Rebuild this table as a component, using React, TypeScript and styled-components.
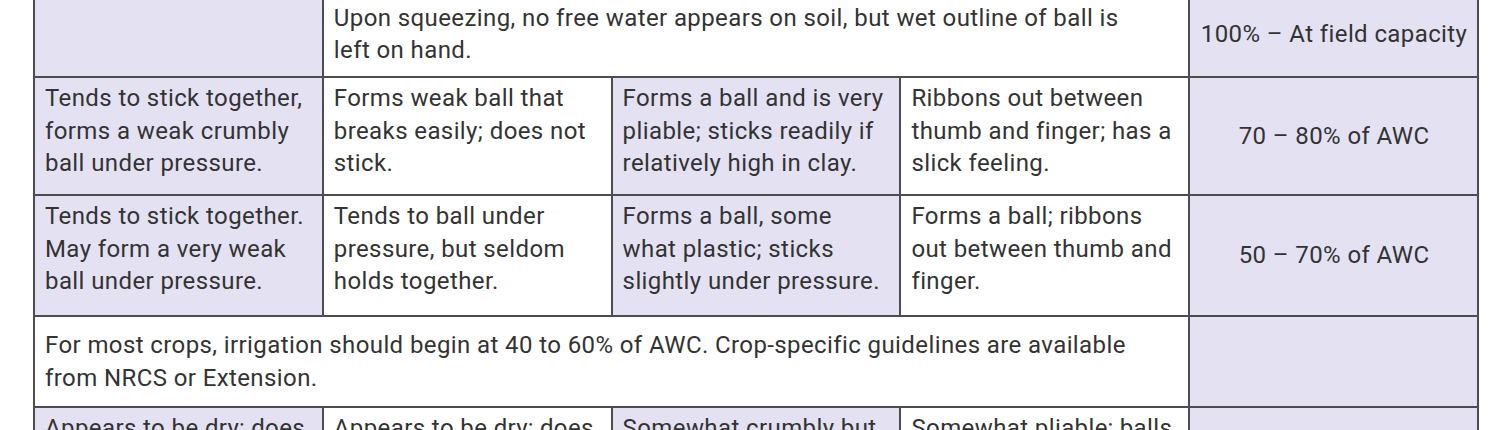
import React from "react";
import styled, { createGlobalStyle } from "styled-components";

const GlobalStyle = createGlobalStyle`
  html, body {
    margin: 0;
    padding: 0;
    background: #ffffff;
  }
  body {
    font-family: Roboto, "Liberation Sans", Arial, sans-serif;
    color: #333333;
    overflow: hidden;
  }
`;

const Page = styled.div`
  padding-left: 33px;
  margin-top: -10px;
`;

const Table = styled.div`
  width: 1446px;
  box-sizing: border-box;
  display: grid;
  grid-template-columns: repeat(5, 1fr);
  grid-template-rows: 84px 116px 119px 89px 120px;
  gap: 2px;
  padding: 2px;
  background: #4d4d4f;
`;

type CellProps = {
  $shade?: boolean;
  $span?: number;
  $center?: boolean;
  $wide?: boolean;
};

const Cell = styled.div<CellProps>`
  grid-column: span ${(p) => p.$span ?? 1};
  background: ${(p) => (p.$shade ? "#e4e2f2" : "#ffffff")};
  box-sizing: border-box;
  display: flex;
  flex-direction: column;
  justify-content: ${(p) => (p.$center || p.$wide ? "center" : "flex-start")};
  align-items: ${(p) => (p.$center ? "center" : "stretch")};
  text-align: ${(p) => (p.$center ? "center" : "left")};
  padding: ${(p) => (p.$center || p.$wide ? "0" : "4px")} ${(p) => (p.$wide ? "40px" : "9px")} 0 10px;
  font-size: 24px;
  letter-spacing: 0.4px;
  line-height: 32.5px;
  color: #333333;
  overflow: hidden;
`;

export default function App() {
  return (
    <>
      <GlobalStyle />
      <Page>
        <Table>
          <Cell $shade />
          <Cell $span={3} $wide>
            Upon squeezing, no free water appears on soil, but wet outline of ball is left on hand.
          </Cell>
          <Cell $shade $center>100% – At field capacity</Cell>

          <Cell $shade>Tends to stick together, forms a weak crumbly ball under pressure.</Cell>
          <Cell>Forms weak ball that breaks easily; does not stick.</Cell>
          <Cell $shade>Forms a ball and is very pliable; sticks readily if relatively high in clay.</Cell>
          <Cell>Ribbons out between thumb and finger; has a slick feeling.</Cell>
          <Cell $shade $center>70 – 80% of AWC</Cell>

          <Cell $shade>Tends to stick together. May form a very weak ball under pressure.</Cell>
          <Cell>Tends to ball under pressure, but seldom holds together.</Cell>
          <Cell $shade>Forms a ball, some what plastic; sticks slightly under pressure.</Cell>
          <Cell>Forms a ball; ribbons out between thumb and finger.</Cell>
          <Cell $shade $center>50 – 70% of AWC</Cell>

          <Cell $span={4} $wide>
            For most crops, irrigation should begin at 40 to 60% of AWC. Crop-specific guidelines are available from NRCS or Extension.
          </Cell>
          <Cell $shade />

          <Cell $shade>Appears to be dry; does not form a ball under pressure.</Cell>
          <Cell>Appears to be dry; does not form a ball.</Cell>
          <Cell $shade>Somewhat crumbly but holds together from pressure.</Cell>
          <Cell>Somewhat pliable; balls up under pressure.</Cell>
          <Cell $shade $center>25 – 50% of AWC</Cell>
        </Table>
      </Page>
    </>
  );
}
